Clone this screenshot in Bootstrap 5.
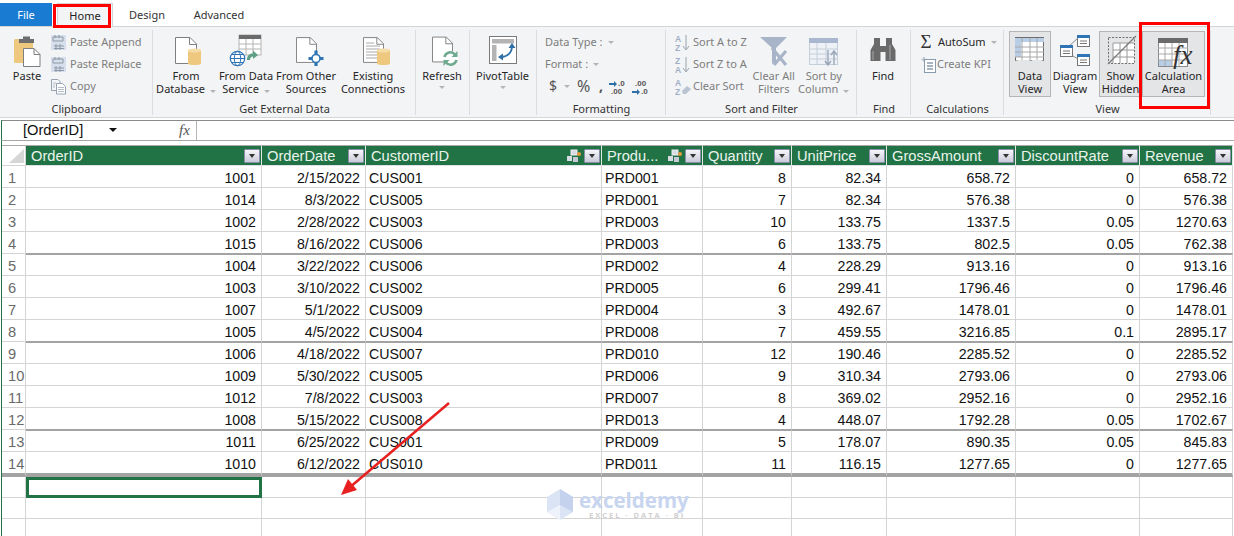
<!DOCTYPE html>
<html lang="en">
<head>
<meta charset="utf-8">
<title>Power Pivot Data View</title>
<link href="https://cdn.jsdelivr.net/npm/bootstrap@5.3.0/dist/css/bootstrap.min.css" rel="stylesheet">
<style>
html,body{height:536px;overflow:hidden;background:#fff}
body{font-family:"Noto Sans","Open Sans",sans-serif;font-size:11px;color:#262626;position:relative}
.rtabs{height:27px;padding-top:3px;border-bottom:1px solid #d4d4d4;--bs-nav-tabs-border-width:0;flex-wrap:nowrap}
.rtabs .nav-link{height:23px;padding:0;font-size:11px;line-height:24px;color:#333;border:0;border-radius:0;text-align:center}
.rtabs .t-file{width:52px;background:#1a7bd2;color:#fff}
.rtabs .t-home{width:56px;height:24px;margin-left:5px;background:#f3f4f6;border:1px solid #d4d4d4;border-bottom:0;color:#222}
.rtabs .t-design{width:68px}
.rtabs .t-adv{width:76px}
.ribbon{height:91px;background:#f3f4f6;border-bottom:1px solid #d6d6d6}
.rgroup{height:91px;position:relative;flex:none}
.rgroup::after{content:"";position:absolute;right:0;top:3px;bottom:3px;width:1px;background:#dcdde0}
.rbody{flex:1 1 auto;padding-top:4px;min-height:0}
.rlabel{height:13px;line-height:13px;margin-bottom:3px;text-align:center;color:#333}
.g-clip{width:153px}.g-ext{width:263px}.g-ref{width:54px}.g-piv{width:67px}.g-fmt{width:129px}.g-sort{width:191px}.g-find{width:54px}.g-calc{width:93px}.g-view{width:207px}
.bigb{flex:none;line-height:13px;text-align:center;white-space:nowrap;height:66px;display:flex;flex-direction:column;align-items:center;color:#262626}
.bigb svg{flex:none;width:40px;height:38px;display:block}
.bigb.off{color:#7d7d7d}
.w52{width:52px}.w60{width:60px}.w74{width:74px}.w65{width:65px}.w50{width:50px}
.w48{width:48px}.w43{width:43px}.w42{width:42px}.w63{width:63px}.w54{width:54px}
.m-l3{margin-left:3px}.m-l5{margin-left:5px}.m-l2{margin-left:2px}
.boxed{background:#e4e5e7;border:1px solid #b5b5b5}
.boxed svg{margin-top:-1px}
.smcol{flex:none}
.smrow{height:22px;line-height:22px;display:flex;align-items:center;white-space:nowrap;color:#7d7d7d}
.smrow svg{flex:none;width:17px;height:17px;margin-right:3px}
.smrow.on{color:#262626}
.tight{margin-left:-2px}
.tri{display:inline-block;width:0;height:0;border-left:3px solid transparent;border-right:3px solid transparent;border-top:3px solid #b4b4b4;margin-left:5px;flex:none}
.clip-col{margin-left:-4px}.sort-col{margin-left:9px}.fmt-col{margin-left:8px}.calc-col{margin-left:8px}
.fmt-dollar{font-size:14px;margin-left:12px;color:#555;width:11px}
.fmt-pct{font-size:16px;color:#555;margin-left:7px;width:16px}
.fmt-comma{font-size:14px;font-weight:700;color:#555;margin-left:6px;width:9px;line-height:14px}
.fmt-ico{width:17px!important;height:17px!important;margin-right:6px!important}
.sum{font-family:"Liberation Serif",serif;font-size:19px;color:#333;line-height:16px;width:14px;margin-right:5px;text-align:center}
.fxbar{height:21px;margin-top:2px;margin-left:1px;border-top:1px solid #8a8a8a;border-bottom:1px solid #a6a6a6;border-left:1px solid #217346;background:#fff}
.nmbox{width:195px;font:14.67px/19px "Liberation Sans",sans-serif;color:#111;padding-left:21px;position:relative;border-right:1px solid #b5b5b5}
.nmtri{position:absolute;left:107px;top:7px;width:0;height:0;border-left:4px solid transparent;border-right:4px solid transparent;border-top:4px solid #111}
.fxm{position:absolute;left:177px;top:0;font:italic 15px/19px "Liberation Serif",serif;color:#555}
.sheet{margin-left:1px;padding-top:4px;border-left:1px solid #217346;height:395px;overflow:hidden}
.xl{table-layout:fixed;width:1231px;margin:0;border-collapse:separate;border-spacing:0;font-family:"Liberation Sans",sans-serif;font-size:14.2px;color:#111;--bs-table-bg:transparent}
.xl>*>*>*{border-width:0;box-shadow:none}
.xl col.c0{width:24px}.xl col.c1{width:236px}.xl col.c2{width:104px}.xl col.c3{width:236px}.xl col.c4{width:101px}.xl col.c5{width:89px}.xl col.c6{width:95px}.xl col.c7{width:129px}.xl col.c8{width:124px}.xl col.c9{width:93px}
.xl thead th{height:21px;background:#217346;color:#eaf3ec;font-weight:400;font-size:14.67px;border-right:1px solid #dfe8e2;border-top:1px solid #a8a8a8;line-height:18px;padding:0 1px 0 5px;vertical-align:middle}
.xl thead th.cor{background:#fff;padding:0;border-right:1px solid #d4d4d4;border-bottom:1px solid #d4d4d4}
.xl thead th.cor svg{display:block}
.xl td{height:22px;border-right:1px solid #d4d4d4;border-bottom:1px solid #d4d4d4;line-height:18px;padding:3px 5px 0 3px;vertical-align:top;text-align:right;white-space:nowrap;overflow:hidden;background:#fff}
.xl td.tl{text-align:left}
.xl td.rh{text-align:left;padding-left:6px;color:#6a6a6a;font-size:14.67px}
.xl tr.sep td:not(.rh){border-bottom-color:#a3a3a3}
.xl tr.sep+tr td:not(.rh){border-top:1px solid #a3a3a3;padding-top:2px}
.xl tr.end td{height:25px;border-bottom:4px solid #a3a3a3}
.xl tr.e1 td{height:21px}
.xl tr.e2 td{height:17px;border-bottom:0}
.xl td.sel{border:3px solid #217346}
.fbtn{flex:none;width:16px;height:14px;border:1px solid #8a8ea8;background:linear-gradient(#f6f6fa,#c9cbd9);position:relative;border-radius:1px}
.fbtn::after{content:"";position:absolute;left:4px;top:4px;width:0;height:0;border-left:3.5px solid transparent;border-right:3.5px solid transparent;border-top:4px solid #333}
.hier{flex:none;width:14px;height:14px;margin-right:3px}
.ol-home{position:absolute;left:53px;top:4px;width:58px;height:24px;border:3px solid #f00}
.ol-calc{position:absolute;left:1139px;top:22px;width:71px;height:87px;border:3px solid #f00}
.ol-arrow{position:absolute;left:330px;top:395px;width:130px;height:110px}
.wm{position:absolute;left:546px;top:488px;width:145px;height:34px;pointer-events:none}
.wm svg{width:28px;height:33px;flex:none}
.wm-t{font:700 20.500px/19px "Open Sans",sans-serif;color:#c8d5ef;margin-top:3px;margin-left:5px}
.wm-s{font:700 7.500px/9px "Open Sans",sans-serif;color:#d0d0d0;letter-spacing:2px;margin-left:15px;margin-top:1px;white-space:nowrap}
</style>
</head>
<body>
<svg width="0" height="0" class="position-absolute">
<defs>
<symbol id="doc" viewBox="0 0 22 27"><path d="M.5.5H15L21.5 7V26.5H.5Z" fill="#fff" stroke="#7f7f7f"/><path d="M14.5 .5V7.5H21.5" fill="none" stroke="#7f7f7f"/></symbol>
<symbol id="cyl" viewBox="0 0 13 18"><path d="M0 2.5C0 .5 13 .5 13 2.5V15.5C13 17.5 0 17.5 0 15.5Z" fill="#edc87e"/><ellipse cx="6.5" cy="2.5" rx="6.5" ry="2" fill="#f6dca6"/></symbol>
<symbol id="sheetadd" viewBox="0 0 17 17"><rect x="1" y="1" width="15" height="15" fill="#d6dfeb"/><path d="M5 1V4M9 1V4M3 3H13V7H3Z" fill="none" stroke="#8d99a8"/><path d="M4 12H14M4 14.5H14M6 10V16M10 10V16" stroke="#8d99a8" fill="none"/></symbol>
</defs>
</svg>

<ul class="nav nav-tabs rtabs">
<li class="nav-item"><a class="nav-link t-file" href="#">File</a></li>
<li class="nav-item"><a class="nav-link t-home" href="#">Home</a></li>
<li class="nav-item"><a class="nav-link t-design" href="#">Design</a></li>
<li class="nav-item"><a class="nav-link t-adv" href="#">Advanced</a></li>
</ul>

<div class="ribbon d-flex">
  <section class="rgroup g-clip d-flex flex-column">
    <div class="rbody d-flex">
      <div class="bigb w54">
        <svg viewBox="0 0 40 38"><rect x="7" y="8" width="19" height="24" rx="1.5" fill="#edc87e"/><path d="M12 12V8H16V5.5H23V8H27V12Z" fill="#6d6d6d"/><path d="M16.5 17.5H27L33 23.5V35.5H16.5Z" fill="#fff" stroke="#7f7f7f"/><path d="M27 17.5V23.5H33" fill="none" stroke="#7f7f7f"/></svg>
        <span>Paste</span>
      </div>
      <div class="smcol clip-col">
        <div class="smrow"><svg><use href="#sheetadd"/></svg>Paste Append</div>
        <div class="smrow"><svg><use href="#sheetadd"/></svg>Paste Replace</div>
        <div class="smrow"><svg viewBox="0 0 17 17"><path d="M1.5 1.5H8L10 3.5V12.5H1.5Z" fill="#f4f6f9" stroke="#98a3b2"/><path d="M6.5 5.5H12.5L15.5 8.5V16H6.5Z" fill="#fff" stroke="#98a3b2"/><path d="M8 9.5H14M8 11.5H14M8 13.5H14M3 5H6M3 7H5M3 9H5" stroke="#b4bcc7"/></svg>Copy</div>
      </div>
    </div>
    <div class="rlabel">Clipboard</div>
  </section>

  <section class="rgroup g-ext d-flex flex-column">
    <div class="rbody d-flex">
      <div class="bigb w60 m-l3">
        <svg viewBox="0 0 40 38"><use href="#doc" x="9" y="6" width="22" height="27"/><use href="#cyl" x="22" y="17" width="13" height="18"/></svg>
        <span>From</span><span>Database<i class="tri"></i></span>
      </div>
      <div class="bigb w60">
        <svg viewBox="0 0 40 38"><rect x="13" y="4" width="22" height="20" fill="#fff" stroke="#b4b4b4"/><rect x="13" y="4" width="22" height="4" fill="#6b6b6b"/><path d="M13 13H35M13 18H35M20 8V24M27 8V24" stroke="#b4b4b4" fill="none"/><circle cx="11.5" cy="27.5" r="7.2" fill="#fff" stroke="#2f75b5" stroke-width="1.2"/><ellipse cx="11.5" cy="27.5" rx="3.2" ry="7.2" fill="none" stroke="#2f75b5"/><path d="M4.3 27.5H18.7M5.5 23.5H17.5M5.5 31.5H17.5" stroke="#2f75b5" fill="none"/><path d="M21 29C21 24 24 22.5 27 22.5V19.5L32 24L27 28V25.5C25 25.5 24 27 24 29Z" fill="#5f9f86"/></svg>
        <span>From Data</span><span>Service<i class="tri"></i></span>
      </div>
      <div class="bigb w60">
        <svg viewBox="0 0 40 38"><use href="#doc" x="10" y="6" width="21" height="26"/><path d="M30 19.5V35M22.5 27.500H37.500" stroke="#2f75b5" stroke-width="3.2"/><circle cx="30" cy="27.5" r="4" fill="#fff" stroke="#2f75b5" stroke-width="1.6"/></svg>
        <span>From Other</span><span>Sources</span>
      </div>
      <div class="bigb w74">
        <svg viewBox="0 0 40 38"><use href="#doc" x="10" y="6" width="21" height="26"/><path d="M13 12H21M13 15H27M13 18H27M13 21H24M13 24H24M13 27H24" stroke="#a8a8a8" fill="none"/><use href="#cyl" x="24" y="17" width="13" height="18"/></svg>
        <span>Existing</span><span>Connections</span>
      </div>
    </div>
    <div class="rlabel">Get External Data</div>
  </section>

  <section class="rgroup g-ref d-flex flex-column">
    <div class="rbody d-flex">
      <div class="bigb w52">
        <svg viewBox="0 0 40 38"><use href="#doc" x="10" y="5" width="21" height="27"/><circle cx="28.500" cy="27.500" r="7.500" fill="#fff"/><path d="M22.500 26A6 6 0 0 1 33 23.500M34.500 29A6 6 0 0 1 24 31.500" fill="none" stroke="#6fa98f" stroke-width="2.600"/><path d="M35.500 20V26H29.500ZM21.500 35V29H27.500Z" fill="#6fa98f"/></svg>
        <span>Refresh</span><span class="d-flex justify-content-center align-items-center pt-1"><i class="tri ms-0"></i></span>
      </div>
    </div>
    <div class="rlabel">&nbsp;</div>
  </section>

  <section class="rgroup g-piv d-flex flex-column">
    <div class="rbody d-flex">
      <div class="bigb w65">
        <svg viewBox="0 0 40 38"><rect x="6.500" y="5.500" width="27" height="27" fill="#fff" stroke="#7a7a7a"/><rect x="9" y="8" width="22" height="4.500" fill="#b4b4b4"/><rect x="9" y="14" width="4.500" height="16" fill="#b4b4b4"/><path d="M29 15C29 22 24 26 18 26" fill="none" stroke="#2f6fa8" stroke-width="1.800"/><path d="M29 12L32.500 17H25.500ZM15 26L20 22.500V29.500Z" fill="#2f6fa8"/></svg>
        <span>PivotTable</span><span class="d-flex justify-content-center align-items-center pt-1"><i class="tri ms-0"></i></span>
      </div>
    </div>
    <div class="rlabel">&nbsp;</div>
  </section>

  <section class="rgroup g-fmt d-flex flex-column">
    <div class="rbody">
      <div class="fmt-col">
        <div class="smrow">Data Type :<i class="tri"></i></div>
        <div class="smrow">Format :<i class="tri"></i></div>
      </div>
      <div class="smrow">
        <span class="fmt-dollar">$</span><i class="tri ms-1"></i>
        <span class="fmt-pct">%</span>
        <span class="fmt-comma">,</span>
        <svg class="fmt-ico" viewBox="0 0 17 17"><path d="M1 5H6V3L9 6L6 9V7H1Z" fill="#2f6fa8"/><text x="10" y="8" font-size="8" font-family="Liberation Sans" font-weight="700" fill="#555">.0</text><text x="3" y="16" font-size="8" font-family="Liberation Sans" font-weight="700" fill="#555">.00</text></svg>
        <svg class="fmt-ico" viewBox="0 0 17 17"><text x="4" y="8" font-size="8" font-family="Liberation Sans" font-weight="700" fill="#555">.00</text><path d="M1 13H6V11L9 14L6 17V15H1Z" fill="#2f6fa8"/><text x="10" y="16" font-size="8" font-family="Liberation Sans" font-weight="700" fill="#555">.0</text></svg>
      </div>
    </div>
    <div class="rlabel">Formatting</div>
  </section>

  <section class="rgroup g-sort d-flex flex-column">
    <div class="rbody d-flex">
      <div class="smcol sort-col">
        <div class="smrow"><svg viewBox="0 0 17 17"><text x="0" y="8" font-size="8.500" font-family="Liberation Sans" font-weight="700" fill="#9fb0c6">A</text><text x="0" y="16.500" font-size="8.500" font-family="Liberation Sans" font-weight="700" fill="#9fb0c6">Z</text><path d="M11 1V15M8 12L11 16L14 12" fill="none" stroke="#9aa3ae"/></svg><span class="tight">Sort A to Z</span></div>
        <div class="smrow"><svg viewBox="0 0 17 17"><text x="0" y="8" font-size="8.500" font-family="Liberation Sans" font-weight="700" fill="#9fb0c6">Z</text><text x="0" y="16.500" font-size="8.500" font-family="Liberation Sans" font-weight="700" fill="#9fb0c6">A</text><path d="M11 1V15M8 12L11 16L14 12" fill="none" stroke="#9aa3ae"/></svg><span class="tight">Sort Z to A</span></div>
        <div class="smrow"><svg viewBox="0 0 17 17"><text x="0" y="8" font-size="8.500" font-family="Liberation Sans" font-weight="700" fill="#9fb0c6">A</text><text x="0" y="16.500" font-size="8.500" font-family="Liberation Sans" font-weight="700" fill="#9fb0c6">Z</text><path d="M7 13L12 8L16 11L11 16H8Z" fill="#b9c4d2"/></svg><span class="tight">Clear Sort</span></div>
      </div>
      <div class="bigb off w50 m-l2">
        <svg viewBox="0 0 40 38"><path d="M6 6H33L22 17V31L18 33V17Z" fill="#a8b4c8"/><path d="M18 17L32 34M32 20L20 34" stroke="#a8b4c8" stroke-width="3.200"/></svg>
        <span>Clear All</span><span>Filters</span>
      </div>
      <div class="bigb off w50">
        <svg viewBox="0 0 40 38"><rect x="5.500" y="7.500" width="28" height="26" fill="#eef1f6" stroke="#c5cedb"/><rect x="5" y="7" width="29" height="5" fill="#a8b7cf"/><path d="M5 18H34M5 23H34M5 28H34M13 12V33M22 12V33" stroke="#c5cedb"/><path d="M24 19V33M21 30L24 34L27 30M30 34V20M27 24L30 20L33 24" fill="none" stroke="#9aa7b8" stroke-width="1.400"/></svg>
        <span>Sort by</span><span>Column<i class="tri"></i></span>
      </div>
    </div>
    <div class="rlabel">Sort and Filter</div>
  </section>

  <section class="rgroup g-find d-flex flex-column">
    <div class="rbody d-flex">
      <div class="bigb w52">
        <svg viewBox="0 0 40 38"><path d="M11 7H17V15H23V7H29V13L32.500 19V30H22.500V21H17.500V30H7.500V19L11 13Z" fill="#6a6a6a"/><path d="M10 20V29M27 14V29" stroke="#a8a8a8" stroke-width="1"/></svg>
        <span>Find</span>
      </div>
    </div>
    <div class="rlabel">Find</div>
  </section>

  <section class="rgroup g-calc d-flex flex-column">
    <div class="rbody">
      <div class="calc-col">
        <div class="smrow on"><span class="sum">&#931;</span>AutoSum<i class="tri"></i></div>
        <div class="smrow"><svg viewBox="0 0 17 17"><path d="M5 1V6M2.500 3.500H7.500" stroke="#b4bcc7" stroke-width="1.500"/><rect x="5.500" y="3.500" width="11" height="13" fill="#fff" stroke="#8a9bb0"/><path d="M8 7H14M8 10H14M8 13H14" stroke="#8a9bb0" stroke-width="1.500"/></svg><span class="tight">Create KPI</span></div>
      </div>
    </div>
    <div class="rlabel">Calculations</div>
  </section>

  <section class="rgroup g-view d-flex flex-column">
    <div class="rbody d-flex">
      <div class="bigb boxed w42 m-l5">
        <svg viewBox="0 0 40 38"><rect x="5.500" y="6.500" width="28" height="23" fill="#fff" stroke="#6d6d6d"/><path d="M5 7H34V11H5ZM5 11H11V26H5Z" fill="#b8cde6"/><path d="M5 16H34M5 21H34M5 26H34M12 7V30M20 7V30M27 7V30" stroke="#a8a8a8"/><path d="M5 29L14 32L21 29L25 32L34 29" fill="#e4e5e7"/></svg>
        <span>Data</span><span>View</span>
      </div>
      <div class="bigb w48">
        <svg viewBox="0 0 40 38"><path d="M13 16L23 7M13 22L23 28" stroke="#8c8c8c" fill="none"/><rect x="22.500" y="4.500" width="12" height="11" fill="#fff" stroke="#777"/><rect x="22" y="4" width="13" height="3" fill="#2f75b5"/><path d="M25 10H32M25 12.500H32" stroke="#777"/><rect x="5.500" y="14.500" width="12" height="11" fill="#fff" stroke="#777"/><rect x="5" y="14" width="13" height="3" fill="#2f75b5"/><path d="M8 20H15M8 22.500H15" stroke="#777"/><rect x="22.500" y="23.500" width="12" height="11" fill="#fff" stroke="#777"/><rect x="22" y="23" width="13" height="3" fill="#2f75b5"/><path d="M25 29H32M25 31.500H32" stroke="#777"/></svg>
        <span>Diagram</span><span>View</span>
      </div>
      <div class="bigb boxed w43">
        <svg viewBox="0 0 40 38"><rect x="7.500" y="6.500" width="26" height="26" fill="none" stroke="#6d6d6d" stroke-dasharray="2 1.500"/><rect x="12" y="12" width="21" height="20" fill="#fff"/><path d="M12 12H33M12 19H33M12 26H33M12 12V32M19 12V32M26 12V32" stroke="#9a9a9a"/><path d="M7 33L35 5" stroke="#7c7c7c" stroke-width="1.200"/></svg>
        <span>Show</span><span>Hidden</span>
      </div>
      <div class="bigb boxed w63">
        <svg viewBox="0 0 40 38"><rect x="4.500" y="8.500" width="29" height="27" fill="#fff" stroke="#8a8a8a"/><rect x="4" y="7" width="30" height="5" fill="#6a6a6a"/><rect x="5" y="29" width="13" height="6" fill="#b8cde6"/><path d="M4 17H34M4 23H34M4 29H34M11 12V35M18 12V35M25 12V35" stroke="#a8a8a8"/><text x="19" y="33" font-family="Liberation Serif" font-style="italic" font-size="27" fill="#333">fx</text></svg>
        <span>Calculation</span><span>Area</span>
      </div>
    </div>
    <div class="rlabel">View</div>
  </section>
  <div class="flex-grow-1"></div>
</div>

<div class="fxbar d-flex position-relative">
  <div class="nmbox">[OrderID]<i class="nmtri"></i><span class="fxm">fx</span></div>
</div>

<div class="sheet">
<table class="table xl">
<colgroup><col class="c0"><col class="c1"><col class="c2"><col class="c3"><col class="c4"><col class="c5"><col class="c6"><col class="c7"><col class="c8"><col class="c9"></colgroup>
<thead><tr>
<th class="cor"><svg width="23" height="19" viewBox="0 0 23 19"><path d="M7 17L22 3V17Z" fill="#d6d6d6"/></svg></th>
<th><div class="d-flex justify-content-between align-items-center">OrderID<i class="fbtn"></i></div></th>
<th><div class="d-flex justify-content-between align-items-center">OrderDate<i class="fbtn"></i></div></th>
<th><div class="d-flex align-items-center"><span class="flex-grow-1">CustomerID</span><svg class="hier" viewBox="0 0 14 14"><rect x="4" y="1" width="6" height="5" fill="#d8dce4" stroke="#eef0f4"/><rect x="0" y="7" width="5" height="5" fill="#d8dce4"/><rect x="6" y="8" width="5" height="5" fill="#c5cad6"/><circle cx="12" cy="5" r="2" fill="#e59a3c"/></svg><i class="fbtn"></i></div></th>
<th><div class="d-flex align-items-center"><span class="flex-grow-1">Produ...</span><svg class="hier" viewBox="0 0 14 14"><rect x="4" y="1" width="6" height="5" fill="#d8dce4" stroke="#eef0f4"/><rect x="0" y="7" width="5" height="5" fill="#d8dce4"/><rect x="6" y="8" width="5" height="5" fill="#c5cad6"/><circle cx="12" cy="5" r="2" fill="#e59a3c"/></svg><i class="fbtn"></i></div></th>
<th><div class="d-flex justify-content-between align-items-center">Quantity<i class="fbtn"></i></div></th>
<th><div class="d-flex justify-content-between align-items-center">UnitPrice<i class="fbtn"></i></div></th>
<th><div class="d-flex justify-content-between align-items-center">GrossAmount<i class="fbtn"></i></div></th>
<th><div class="d-flex justify-content-between align-items-center">DiscountRate<i class="fbtn"></i></div></th>
<th><div class="d-flex justify-content-between align-items-center">Revenue<i class="fbtn"></i></div></th>
</tr></thead>
<tbody>
<tr><td class="rh">1</td><td>1001</td><td>2/15/2022</td><td class="tl">CUS001</td><td class="tl">PRD001</td><td>8</td><td>82.34</td><td>658.72</td><td>0</td><td>658.72</td></tr>
<tr><td class="rh">2</td><td>1014</td><td>8/3/2022</td><td class="tl">CUS005</td><td class="tl">PRD001</td><td>7</td><td>82.34</td><td>576.38</td><td>0</td><td>576.38</td></tr>
<tr><td class="rh">3</td><td>1002</td><td>2/28/2022</td><td class="tl">CUS003</td><td class="tl">PRD003</td><td>10</td><td>133.75</td><td>1337.5</td><td>0.05</td><td>1270.63</td></tr>
<tr class="sep"><td class="rh">4</td><td>1015</td><td>8/16/2022</td><td class="tl">CUS006</td><td class="tl">PRD003</td><td>6</td><td>133.75</td><td>802.5</td><td>0.05</td><td>762.38</td></tr>
<tr><td class="rh">5</td><td>1004</td><td>3/22/2022</td><td class="tl">CUS006</td><td class="tl">PRD002</td><td>4</td><td>228.29</td><td>913.16</td><td>0</td><td>913.16</td></tr>
<tr><td class="rh">6</td><td>1003</td><td>3/10/2022</td><td class="tl">CUS002</td><td class="tl">PRD005</td><td>6</td><td>299.41</td><td>1796.46</td><td>0</td><td>1796.46</td></tr>
<tr><td class="rh">7</td><td>1007</td><td>5/1/2022</td><td class="tl">CUS009</td><td class="tl">PRD004</td><td>3</td><td>492.67</td><td>1478.01</td><td>0</td><td>1478.01</td></tr>
<tr class="sep"><td class="rh">8</td><td>1005</td><td>4/5/2022</td><td class="tl">CUS004</td><td class="tl">PRD008</td><td>7</td><td>459.55</td><td>3216.85</td><td>0.1</td><td>2895.17</td></tr>
<tr><td class="rh">9</td><td>1006</td><td>4/18/2022</td><td class="tl">CUS007</td><td class="tl">PRD010</td><td>12</td><td>190.46</td><td>2285.52</td><td>0</td><td>2285.52</td></tr>
<tr><td class="rh">10</td><td>1009</td><td>5/30/2022</td><td class="tl">CUS005</td><td class="tl">PRD006</td><td>9</td><td>310.34</td><td>2793.06</td><td>0</td><td>2793.06</td></tr>
<tr><td class="rh">11</td><td>1012</td><td>7/8/2022</td><td class="tl">CUS003</td><td class="tl">PRD007</td><td>8</td><td>369.02</td><td>2952.16</td><td>0</td><td>2952.16</td></tr>
<tr class="sep"><td class="rh">12</td><td>1008</td><td>5/15/2022</td><td class="tl">CUS008</td><td class="tl">PRD013</td><td>4</td><td>448.07</td><td>1792.28</td><td>0.05</td><td>1702.67</td></tr>
<tr><td class="rh">13</td><td>1011</td><td>6/25/2022</td><td class="tl">CUS001</td><td class="tl">PRD009</td><td>5</td><td>178.07</td><td>890.35</td><td>0.05</td><td>845.83</td></tr>
<tr class="end"><td class="rh">14</td><td>1010</td><td>6/12/2022</td><td class="tl">CUS010</td><td class="tl">PRD011</td><td>11</td><td>116.15</td><td>1277.65</td><td>0</td><td>1277.65</td></tr>
<tr class="e1"><td></td><td class="sel"></td><td></td><td></td><td></td><td></td><td></td><td></td><td></td><td></td></tr>
<tr class="e1"><td></td><td></td><td></td><td></td><td></td><td></td><td></td><td></td><td></td><td></td></tr>
<tr class="e2"><td></td><td></td><td></td><td></td><td></td><td></td><td></td><td></td><td></td><td></td></tr>
</tbody>
</table>
</div>

<div class="ol-home"></div>
<div class="ol-calc"></div>
<svg class="ol-arrow" viewBox="0 0 130 110"><path d="M119 8L19 93" stroke="#e8201f" stroke-width="2.500" fill="none"/><path d="M11 100L18 84L27 95Z" fill="#e8201f"/></svg>
<div class="wm d-flex">
  <svg viewBox="0 0 28 33"><path d="M14 1L27 9V24L14 32L1 24V9Z" fill="#dbe4f5"/><path d="M14 1L27 9V24L14 17Z" fill="#c4d2ee"/><path d="M14 17L1 24L14 32Z" fill="#eef2fa"/></svg>
  <div><div class="wm-t">exceldemy</div><div class="wm-s">EXCEL · DATA · BI</div></div>
</div>
<script src="https://cdn.jsdelivr.net/npm/bootstrap@5.3.0/dist/js/bootstrap.bundle.min.js"></script>
</body>
</html>
